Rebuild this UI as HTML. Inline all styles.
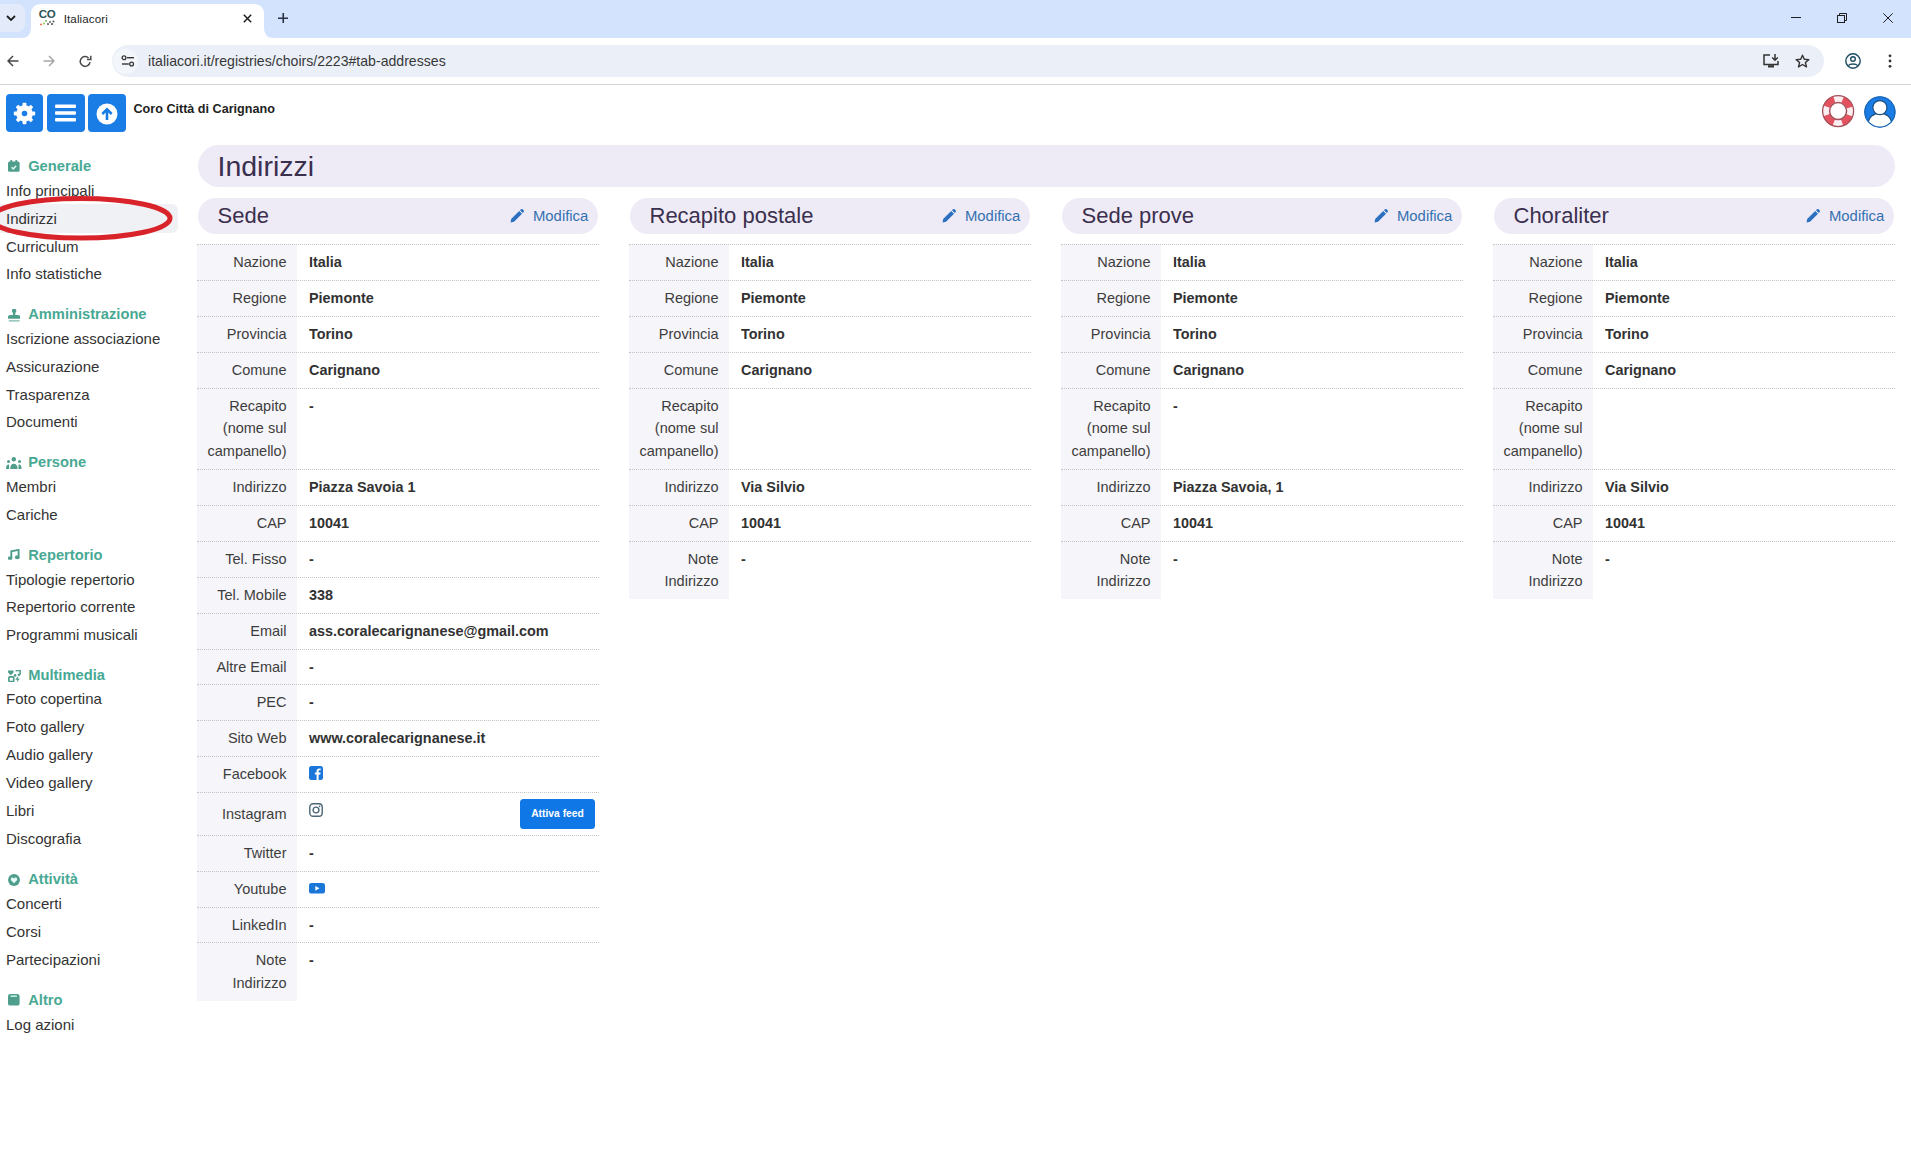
<!DOCTYPE html><html><head><meta charset="utf-8"><title>Italiacori</title><style>
*{box-sizing:border-box;margin:0;padding:0}
html,body{width:1911px;height:1152px;overflow:hidden;background:#fff;font-family:"Liberation Sans",sans-serif;}
.a{position:absolute}
.tabs{left:0;top:0;width:1911px;height:38px;background:#d3e3fd}
.toolbar{left:0;top:37.5px;width:1911px;height:47px;background:#fff;border-bottom:1px solid #d2d4d8}
.omni{left:112px;top:44.6px;width:1712px;height:32.5px;border-radius:17px;background:#ebf0f8}
.sb{left:6px;font-size:15px;line-height:22.5px;color:#333;white-space:nowrap}
.sh{left:8px;font-size:14.7px;line-height:22.5px;color:#47a994;font-weight:bold;white-space:nowrap}
.sh svg{position:absolute;left:0}
.sh span{position:absolute;left:20px;top:0}
.pill{background:#eeebf6;border-radius:22px}
.ttl{color:#3b2f4e}
.lab{font-size:14.5px;line-height:22.5px;color:#3d3d3d;text-align:right;white-space:nowrap}
.val{font-size:14.4px;line-height:22.5px;color:#323232;font-weight:bold;white-space:nowrap}
.bd{height:0;border-top:1px dotted #c4c4c4}
.lbg{background:#f6f5fa}
.mod{font-size:14.85px;line-height:22.5px;color:#3571b0;white-space:nowrap}
</style></head><body>
<div class="a tabs"></div>
<div class="a" style="left:-8px;top:4px;width:33px;height:28px;border-radius:8px;background:#e3ebfa"></div>
<svg class="a" style="left:6px;top:15px" width="10" height="6" viewBox="0 0 10 6"><path d="M1 1l4 4 4-4" fill="none" stroke="#1f1f1f" stroke-width="1.8"/></svg>
<div class="a" style="left:31px;top:4px;width:233px;height:34px;background:#fff;border-radius:9px 9px 0 0"></div>
<svg class="a" style="left:21px;top:28px" width="10" height="10" viewBox="0 0 10 10"><path d="M0 10 Q10 10 10 0 L10 10 Z" fill="#fff"/></svg>
<svg class="a" style="left:264px;top:28px" width="10" height="10" viewBox="0 0 10 10"><path d="M0 0 Q0 10 10 10 L0 10 Z" fill="#fff"/></svg>
<div class="a" style="left:38.8px;top:8px;font-size:11.5px;font-weight:bold;color:#2c5258;letter-spacing:-0.4px;line-height:12px">CO</div>
<svg class="a" style="left:39px;top:19px" width="16" height="7" viewBox="0 0 16 7"><circle cx="2" cy="5.5" r="1" fill="#e8704a"/><circle cx="5" cy="4.5" r="1" fill="#9bc24a"/><circle cx="7" cy="2" r="1" fill="#6cbf6a"/><circle cx="9" cy="5" r="1" fill="#555"/><circle cx="11" cy="3" r="1" fill="#666"/><circle cx="13" cy="5" r="1" fill="#444"/><circle cx="14.5" cy="2.5" r="1" fill="#555"/></svg>
<div class="a" style="left:63.7px;top:11px;font-size:11.6px;line-height:16px;color:#1f1f1f;letter-spacing:0.1px">Italiacori</div>
<svg class="a" style="left:242.5px;top:13.6px" width="9" height="9" viewBox="0 0 9 9"><path d="M0.8 0.8L8.2 8.2M8.2 0.8L0.8 8.2" stroke="#1f1f1f" stroke-width="1.5"/></svg>
<svg class="a" style="left:277.6px;top:12.8px" width="10.5" height="10.5" viewBox="0 0 10.5 10.5"><path d="M5.25 0V10.5M0 5.25H10.5" stroke="#2a3140" stroke-width="1.6"/></svg>
<div class="a" style="left:1791px;top:17px;width:10px;height:1px;background:#1f1f1f"></div>
<svg class="a" style="left:1837px;top:13px" width="10" height="10" viewBox="0 0 10 10"><rect x="0.5" y="2.5" width="7" height="7" fill="none" stroke="#1f1f1f"/><path d="M2.5 2.5V0.5H9.5V7.5H7.5" fill="none" stroke="#1f1f1f"/></svg>
<svg class="a" style="left:1883px;top:13px" width="10" height="10" viewBox="0 0 10 10"><path d="M0.3 0.3L9.7 9.7M9.7 0.3L0.3 9.7" stroke="#1f1f1f" stroke-width="1"/></svg>
<div class="a toolbar"></div>
<svg class="a" style="left:7px;top:55px" width="12" height="12" viewBox="0 0 12 12"><path d="M11.5 6H1.2M6 1L1 6l5 5" fill="none" stroke="#474747" stroke-width="1.5"/></svg>
<svg class="a" style="left:43px;top:55px" width="12" height="12" viewBox="0 0 12 12"><path d="M0.5 6H10.8M6 1l5 5-5 5" fill="none" stroke="#a8a8a8" stroke-width="1.5"/></svg>
<svg class="a" style="left:78.5px;top:54.5px" width="13" height="13" viewBox="0 0 13 13"><path d="M11 7.2A4.9 4.9 0 1 1 9.6 3" fill="none" stroke="#474747" stroke-width="1.5"/><path d="M11.8 0.8V4.6H8" fill="none" stroke="#474747" stroke-width="1.5"/></svg>
<div class="a omni"></div>
<div class="a" style="left:113px;top:49px;width:25px;height:25px;border-radius:13px;background:#f3f6fb"></div>
<svg class="a" style="left:121px;top:55px" width="14" height="12" viewBox="0 0 14 12"><circle cx="3" cy="2.7" r="1.9" fill="none" stroke="#333" stroke-width="1.3"/><path d="M6 2.7H13" stroke="#333" stroke-width="1.4"/><circle cx="10.6" cy="9" r="1.9" fill="none" stroke="#333" stroke-width="1.3"/><path d="M1 9H7.8" stroke="#333" stroke-width="1.4"/></svg>
<div class="a" style="left:148px;top:52px;font-size:14.1px;line-height:18px;color:#383838;white-space:nowrap">italiacori.it/registries/choirs/2223#tab-addresses</div>
<svg class="a" style="left:1763px;top:54px" width="17" height="14" viewBox="0 0 17 14"><path d="M7 1H1V10.5H15V7" fill="none" stroke="#333" stroke-width="1.5"/><path d="M12 0V6M9.2 3.5L12 6.3 14.8 3.5" fill="none" stroke="#333" stroke-width="1.5"/><rect x="5" y="11.2" width="6" height="2.3" fill="#333"/></svg>
<svg class="a" style="left:1795px;top:53.5px" width="15" height="14" viewBox="0 0 15 14"><path d="M7.5 1.2L9.3 5.3 13.8 5.6 10.4 8.5 11.5 12.9 7.5 10.5 3.5 12.9 4.6 8.5 1.2 5.6 5.7 5.3Z" fill="none" stroke="#333" stroke-width="1.4" stroke-linejoin="round"/></svg>
<svg class="a" style="left:1845px;top:53px" width="16" height="16" viewBox="0 0 16 16"><circle cx="8" cy="8" r="7.2" fill="none" stroke="#1d4d63" stroke-width="1.4"/><circle cx="8" cy="6" r="2.3" fill="none" stroke="#1d4d63" stroke-width="1.4"/><path d="M3.3 12.6C5 10.4 11 10.4 12.7 12.6" fill="none" stroke="#1d4d63" stroke-width="1.4"/></svg>
<svg class="a" style="left:1887.5px;top:54px" width="4" height="14" viewBox="0 0 4 14"><circle cx="2" cy="1.8" r="1.4" fill="#333"/><circle cx="2" cy="7" r="1.4" fill="#333"/><circle cx="2" cy="12.3" r="1.4" fill="#333"/></svg>
<div class="a" style="left:6px;top:94px;width:37.3px;height:37.5px;border-radius:4px;background:#1a7de6"></div>
<div class="a" style="left:47.3px;top:94px;width:37.3px;height:37.5px;border-radius:4px;background:#1a7de6"></div>
<div class="a" style="left:88.4px;top:94px;width:37.3px;height:37.5px;border-radius:4px;background:#1a7de6"></div>
<svg class="a" style="left:13.4px;top:102.3px" width="23" height="23" viewBox="-11.5 -11.5 23 23"><circle r="8.3" fill="#fff"/><rect x="-1.9" y="-10.7" width="3.8" height="4" rx="0.8" transform="rotate(0)" fill="#fff"/><rect x="-1.9" y="-10.7" width="3.8" height="4" rx="0.8" transform="rotate(45)" fill="#fff"/><rect x="-1.9" y="-10.7" width="3.8" height="4" rx="0.8" transform="rotate(90)" fill="#fff"/><rect x="-1.9" y="-10.7" width="3.8" height="4" rx="0.8" transform="rotate(135)" fill="#fff"/><rect x="-1.9" y="-10.7" width="3.8" height="4" rx="0.8" transform="rotate(180)" fill="#fff"/><rect x="-1.9" y="-10.7" width="3.8" height="4" rx="0.8" transform="rotate(225)" fill="#fff"/><rect x="-1.9" y="-10.7" width="3.8" height="4" rx="0.8" transform="rotate(270)" fill="#fff"/><rect x="-1.9" y="-10.7" width="3.8" height="4" rx="0.8" transform="rotate(315)" fill="#fff"/><circle r="2.8" fill="#1a7de6"/></svg>
<svg class="a" style="left:55px;top:104px" width="21" height="18" viewBox="0 0 21 18"><rect x="0" y="0.5" width="21" height="3.4" rx="1" fill="#fff"/><rect x="0" y="7.3" width="21" height="3.4" rx="1" fill="#fff"/><rect x="0" y="14" width="21" height="3.4" rx="1" fill="#fff"/></svg>
<svg class="a" style="left:95.5px;top:102.5px" width="22" height="22" viewBox="0 0 22 22"><circle cx="11" cy="11" r="10.5" fill="#fff"/><path d="M11 17V6.5M6.3 11L11 6.3 15.7 11" fill="none" stroke="#1a7de6" stroke-width="2.6" stroke-linecap="butt"/></svg>
<div class="a" style="left:133.5px;top:101.03px;font-size:12.6px;line-height:16px;font-weight:bold;color:#222;white-space:nowrap">Coro Città di Carignano</div>
<svg class="a" style="left:1820px;top:92.5px" width="36" height="36" viewBox="0 0 36 36"><circle cx="18.1" cy="18.1" r="12.3" fill="none" stroke="#fbeef1" stroke-width="6.6"/><circle cx="18.1" cy="18.1" r="12.3" fill="none" stroke="#e4525f" stroke-width="6.6" stroke-dasharray="10.73 8.59" stroke-dashoffset="-4.3"/><circle cx="18.1" cy="18.1" r="15.5" fill="none" stroke="#a65058" stroke-width="1.3"/><circle cx="18.1" cy="18.1" r="8.5" fill="none" stroke="#a65058" stroke-width="1.5"/></svg>
<svg class="a" style="left:1862px;top:93.5px" width="36" height="36" viewBox="0 0 36 36"><defs><clipPath id="uc"><circle cx="17.9" cy="18" r="14.4"/></clipPath></defs><circle cx="17.9" cy="18" r="15.7" fill="#1a7de6"/><circle cx="17.9" cy="18" r="15.2" fill="none" stroke="#1c5fa6" stroke-width="1"/><g clip-path="url(#uc)"><ellipse cx="17.9" cy="29.6" rx="11.6" ry="10.5" fill="#fff" stroke="#1b4a78" stroke-width="1.1"/></g><circle cx="17.9" cy="13.6" r="7" fill="#fff" stroke="#1b4a78" stroke-width="1.1"/></svg>
<div class="a" style="left:0;top:203.5px;width:178px;height:29.5px;background:#eff1f4;border-radius:0 6px 6px 0"></div>
<div class="a" style="left:8px;top:160.0px;line-height:0"><svg width="12" height="12" viewBox="0 0 12 12"><rect x="0" y="1.6" width="11.6" height="10.2" rx="1.6" fill="#4f9e8c"/><rect x="2.4" y="0" width="1.8" height="3" rx=".5" fill="#4f9e8c"/><rect x="7.4" y="0" width="1.8" height="3" rx=".5" fill="#4f9e8c"/><path d="M3.6 7.3L5.3 8.9 8.2 5.8" fill="none" stroke="#dffaf2" stroke-width="1.5"/></svg></div>
<div class="a sh" style="left:28.2px;top:154.96px">Generale</div>
<div class="a sb" style="top:179.75px">Info principali</div>
<div class="a sb" style="top:207.65px">Indirizzi</div>
<div class="a sb" style="top:235.55px">Curriculum</div>
<div class="a sb" style="top:263.45px">Info statistiche</div>
<div class="a" style="left:8px;top:308.9px;line-height:0"><svg width="12.5" height="13" viewBox="0 0 12.5 13"><rect x="4" y="0" width="4.2" height="3.6" rx="1.2" fill="#4f9e8c"/><rect x="5" y="2.5" width="2.3" height="3.6" fill="#4f9e8c"/><path d="M0 9.8V8C0 6.8 1 6 2.2 6H10C11.2 6 12.1 6.8 12.1 8V9.8Z" fill="#4f9e8c"/><rect x="0.7" y="11.2" width="11" height="1.2" rx=".5" fill="#4f9e8c" opacity=".75"/></svg></div>
<div class="a sh" style="left:28.2px;top:302.96px">Amministrazione</div>
<div class="a sb" style="top:327.75px">Iscrizione associazione</div>
<div class="a sb" style="top:355.65px">Assicurazione</div>
<div class="a sb" style="top:383.55px">Trasparenza</div>
<div class="a sb" style="top:411.45px">Documenti</div>
<div class="a" style="left:6px;top:457.0px;line-height:0"><svg width="16" height="12" viewBox="0 0 16 12"><circle cx="7.8" cy="2.3" r="2.2" fill="#4f9e8c"/><circle cx="2.5" cy="4.4" r="1.5" fill="#4f9e8c"/><circle cx="13.5" cy="4.4" r="1.5" fill="#4f9e8c"/><path d="M4.2 11.9C4.2 8.3 5.6 6.8 7.8 6.8S11.6 8.3 11.6 11.9Z" fill="#4f9e8c"/><path d="M0 11.9C0 9.2 0.9 7.5 2.5 7.5L3.1 7.6 3.1 11.9Z M15.6 11.9C15.6 9.2 14.7 7.5 13.1 7.5L12.5 7.6 12.5 11.9Z" fill="#4f9e8c"/></svg></div>
<div class="a sh" style="left:28.2px;top:451.16px">Persone</div>
<div class="a sb" style="top:475.95px">Membri</div>
<div class="a sb" style="top:503.85px">Cariche</div>
<div class="a" style="left:8px;top:549.0px;line-height:0"><svg width="12" height="11" viewBox="0 0 12 11"><path d="M3.3 9.2V2.3L10.6 0.9V7.5" fill="none" stroke="#4f9e8c" stroke-width="1.9"/><rect x="0" y="7.6" width="4.2" height="3.2" rx="1" fill="#4f9e8c"/><ellipse cx="9.3" cy="8.2" rx="2.4" ry="2" fill="#4f9e8c"/></svg></div>
<div class="a sh" style="left:28.2px;top:543.76px">Repertorio</div>
<div class="a sb" style="top:568.55px">Tipologie repertorio</div>
<div class="a sb" style="top:596.45px">Repertorio corrente</div>
<div class="a sb" style="top:624.35px">Programmi musicali</div>
<div class="a" style="left:8px;top:669.8px;line-height:0"><svg width="13" height="12.5" viewBox="0 0 13 12.5"><path d="M2.8 5.2L0.3 2.7C-.5 1.8.1.2 1.4.2 2 .2 2.5.6 2.8 1 3.1.6 3.6.2 4.2.2 5.5.2 6.1 1.8 5.3 2.7Z" fill="#4f9e8c"/><path d="M7.6 0.8L12.2 0.2V4.6" fill="none" stroke="#4f9e8c" stroke-width="1.5"/><circle cx="11" cy="4.7" r="1.3" fill="#4f9e8c"/><circle cx="7.1" cy="5.4" r="1.3" fill="#4f9e8c"/><rect x="0.9" y="6.9" width="4.8" height="4.6" rx="0.8" fill="none" stroke="#4f9e8c" stroke-width="1.7"/><path d="M9.5 6.8L7.2 9.8H9.4L8.6 12.5 11.9 8.8H9.7L10.6 6.8Z" fill="#4f9e8c"/></svg></div>
<div class="a sh" style="left:28.2px;top:663.66px">Multimedia</div>
<div class="a sb" style="top:688.45px">Foto copertina</div>
<div class="a sb" style="top:716.35px">Foto gallery</div>
<div class="a sb" style="top:744.25px">Audio gallery</div>
<div class="a sb" style="top:772.15px">Video gallery</div>
<div class="a sb" style="top:800.05px">Libri</div>
<div class="a sb" style="top:827.95px">Discografia</div>
<div class="a" style="left:8px;top:874.0px;line-height:0"><svg width="12" height="12" viewBox="0 0 12 12"><circle cx="6" cy="6" r="5.95" fill="#4f9e8c"/><path d="M6 9.3L3.2 6.5C2.4 5.6 2.9 3.6 4.3 3.6 5.1 3.6 5.6 4.2 6 4.7 6.4 4.2 6.9 3.6 7.7 3.6 9.1 3.6 9.6 5.6 8.8 6.5Z" fill="#e6fbf5"/></svg></div>
<div class="a sh" style="left:28.2px;top:868.16px">Attività</div>
<div class="a sb" style="top:892.95px">Concerti</div>
<div class="a sb" style="top:920.85px">Corsi</div>
<div class="a sb" style="top:948.75px">Partecipazioni</div>
<div class="a" style="left:8.2px;top:994.0px;line-height:0"><svg width="11.6" height="11.6" viewBox="0 0 11.6 11.6"><rect x="0" y="0" width="11.6" height="11.6" rx="2.2" fill="#4f9e8c"/><rect x="2.6" y="1.4" width="6.3" height="1.5" fill="#c9f3e6"/></svg></div>
<div class="a sh" style="left:28.2px;top:989.16px">Altro</div>
<div class="a sb" style="top:1013.95px">Log azioni</div>
<svg class="a" style="left:0;top:190px" width="180" height="56" viewBox="0 190 180 56"><ellipse cx="80.5" cy="218.3" rx="89.5" ry="19.8" fill="none" stroke="#d9232b" stroke-width="5"/></svg>
<div class="a pill" style="left:197.5px;top:145px;width:1697.5px;height:42px;border-radius:21px"></div>
<div class="a ttl" style="left:217.5px;top:148.92px;font-size:28.5px;line-height:34px">Indirizzi</div>
<div class="a pill" style="left:198.0px;top:198.2px;width:400.3px;height:35.4px;border-radius:18px"></div>
<div class="a ttl" style="left:217.5px;top:201.78px;font-size:22px;line-height:28px;white-space:nowrap">Sede</div>
<svg class="a" style="left:510.0px;top:208.5px" width="14" height="14" viewBox="0 0 14 14"><path d="M0.6 13.4L1.2 10 9.2 2 12 4.8 4 12.8Z" fill="#2a6fc0"/><path d="M10 1.2L11 0.3C11.5-.1 12-.1 12.5.3L13.7 1.5C14.1 2 14.1 2.5 13.7 3L12.8 4Z" fill="#2a6fc0"/></svg>
<div class="a mod" style="left:533.0px;top:204.70px">Modifica</div>
<div class="a lbg" style="left:197px;top:244.3px;width:99.8px;height:756.3px"></div>
<div class="a bd" style="left:197px;top:243.8px;width:402.3px"></div>
<div class="a lab" style="left:197px;width:89.5px;top:251.03px">Nazione</div>
<div class="a val" style="left:309px;top:251.06px">Italia</div>
<div class="a bd" style="left:197px;top:279.8px;width:402.3px"></div>
<div class="a lab" style="left:197px;width:89.5px;top:287.03px">Regione</div>
<div class="a val" style="left:309px;top:287.06px">Piemonte</div>
<div class="a bd" style="left:197px;top:315.8px;width:402.3px"></div>
<div class="a lab" style="left:197px;width:89.5px;top:323.03px">Provincia</div>
<div class="a val" style="left:309px;top:323.06px">Torino</div>
<div class="a bd" style="left:197px;top:351.8px;width:402.3px"></div>
<div class="a lab" style="left:197px;width:89.5px;top:359.03px">Comune</div>
<div class="a val" style="left:309px;top:359.06px">Carignano</div>
<div class="a bd" style="left:197px;top:387.6px;width:402.3px"></div>
<div class="a lab" style="left:197px;width:89.5px;top:394.83px">Recapito<br>(nome sul<br>campanello)</div>
<div class="a val" style="left:309px;top:394.86px">-</div>
<div class="a bd" style="left:197px;top:468.9px;width:402.3px"></div>
<div class="a lab" style="left:197px;width:89.5px;top:476.13px">Indirizzo</div>
<div class="a val" style="left:309px;top:476.16px">Piazza Savoia 1</div>
<div class="a bd" style="left:197px;top:504.8px;width:402.3px"></div>
<div class="a lab" style="left:197px;width:89.5px;top:512.03px">CAP</div>
<div class="a val" style="left:309px;top:512.06px">10041</div>
<div class="a bd" style="left:197px;top:540.8px;width:402.3px"></div>
<div class="a lab" style="left:197px;width:89.5px;top:547.98px">Tel. Fisso</div>
<div class="a val" style="left:309px;top:548.01px">-</div>
<div class="a bd" style="left:197px;top:576.9px;width:402.3px"></div>
<div class="a lab" style="left:197px;width:89.5px;top:584.13px">Tel. Mobile</div>
<div class="a val" style="left:309px;top:584.16px">338</div>
<div class="a bd" style="left:197px;top:612.7px;width:402.3px"></div>
<div class="a lab" style="left:197px;width:89.5px;top:619.93px">Email</div>
<div class="a val" style="left:309px;top:619.96px">ass.coralecarignanese@gmail.com</div>
<div class="a bd" style="left:197px;top:649.0px;width:402.3px"></div>
<div class="a lab" style="left:197px;width:89.5px;top:656.23px">Altre Email</div>
<div class="a val" style="left:309px;top:656.26px">-</div>
<div class="a bd" style="left:197px;top:683.6px;width:402.3px"></div>
<div class="a lab" style="left:197px;width:89.5px;top:690.83px">PEC</div>
<div class="a val" style="left:309px;top:690.86px">-</div>
<div class="a bd" style="left:197px;top:719.9px;width:402.3px"></div>
<div class="a lab" style="left:197px;width:89.5px;top:727.13px">Sito Web</div>
<div class="a val" style="left:309px;top:727.16px">www.coralecarignanese.it</div>
<div class="a bd" style="left:197px;top:755.8px;width:402.3px"></div>
<div class="a lab" style="left:197px;width:89.5px;top:763.03px">Facebook</div>
<div class="a" style="left:309px;top:765.9px;line-height:0"><svg width="14" height="14" viewBox="0 0 14 14"><rect width="14" height="14" rx="2.5" fill="#1a77d9"/><path d="M9.6 14V8.6H11.3L11.6 6.6H9.6V5.3C9.6 4.7 9.9 4.3 10.7 4.3H11.7V2.5C11.5 2.5 10.8 2.4 10.1 2.4 8.6 2.4 7.6 3.3 7.6 5V6.6H5.9V8.6H7.6V14Z" fill="#fff"/></svg></div>
<div class="a bd" style="left:197px;top:792.3px;width:402.3px"></div>
<div class="a lab" style="left:197px;width:89.5px;top:802.53px">Instagram</div>
<div class="a" style="left:309px;top:802.5px;line-height:0"><svg width="14" height="14" viewBox="0 0 14 14"><rect x="0.8" y="0.8" width="12.4" height="12.4" rx="3.3" fill="none" stroke="#4b6576" stroke-width="1.4"/><circle cx="7" cy="7" r="2.9" fill="none" stroke="#4b6576" stroke-width="1.4"/><circle cx="10.6" cy="3.4" r="0.8" fill="#4b6576"/></svg></div>
<div class="a" style="left:520px;top:799.1px;width:75px;height:29.7px;border-radius:3.5px;background:#0f78e6;color:#fff;font-weight:bold;font-size:10.3px;line-height:29.7px;text-align:center;white-space:nowrap">Attiva feed</div>
<div class="a bd" style="left:197px;top:835.0px;width:402.3px"></div>
<div class="a lab" style="left:197px;width:89.5px;top:842.23px">Twitter</div>
<div class="a val" style="left:309px;top:842.26px">-</div>
<div class="a bd" style="left:197px;top:871.0px;width:402.3px"></div>
<div class="a lab" style="left:197px;width:89.5px;top:878.23px">Youtube</div>
<div class="a" style="left:309px;top:883.3px;line-height:0"><svg width="16" height="11" viewBox="0 0 16 11"><rect width="16" height="10.6" rx="2.6" fill="#1a77d9"/><path d="M6.3 2.9V7.7L10.4 5.3Z" fill="#fff"/></svg></div>
<div class="a bd" style="left:197px;top:906.6px;width:402.3px"></div>
<div class="a lab" style="left:197px;width:89.5px;top:913.83px">LinkedIn</div>
<div class="a val" style="left:309px;top:913.86px">-</div>
<div class="a bd" style="left:197px;top:941.8px;width:402.3px"></div>
<div class="a lab" style="left:197px;width:89.5px;top:949.03px">Note<br>Indirizzo</div>
<div class="a val" style="left:309px;top:949.06px">-</div>
<div class="a pill" style="left:630.0px;top:198.2px;width:400.3px;height:35.4px;border-radius:18px"></div>
<div class="a ttl" style="left:649.5px;top:201.78px;font-size:22px;line-height:28px;white-space:nowrap">Recapito postale</div>
<svg class="a" style="left:942.0px;top:208.5px" width="14" height="14" viewBox="0 0 14 14"><path d="M0.6 13.4L1.2 10 9.2 2 12 4.8 4 12.8Z" fill="#2a6fc0"/><path d="M10 1.2L11 0.3C11.5-.1 12-.1 12.5.3L13.7 1.5C14.1 2 14.1 2.5 13.7 3L12.8 4Z" fill="#2a6fc0"/></svg>
<div class="a mod" style="left:965.0px;top:204.70px">Modifica</div>
<div class="a lbg" style="left:629px;top:244.3px;width:99.8px;height:355.0px"></div>
<div class="a bd" style="left:629px;top:243.8px;width:402.3px"></div>
<div class="a lab" style="left:629px;width:89.5px;top:251.03px">Nazione</div>
<div class="a val" style="left:741px;top:251.06px">Italia</div>
<div class="a bd" style="left:629px;top:279.8px;width:402.3px"></div>
<div class="a lab" style="left:629px;width:89.5px;top:287.03px">Regione</div>
<div class="a val" style="left:741px;top:287.06px">Piemonte</div>
<div class="a bd" style="left:629px;top:315.8px;width:402.3px"></div>
<div class="a lab" style="left:629px;width:89.5px;top:323.03px">Provincia</div>
<div class="a val" style="left:741px;top:323.06px">Torino</div>
<div class="a bd" style="left:629px;top:351.8px;width:402.3px"></div>
<div class="a lab" style="left:629px;width:89.5px;top:359.03px">Comune</div>
<div class="a val" style="left:741px;top:359.06px">Carignano</div>
<div class="a bd" style="left:629px;top:387.6px;width:402.3px"></div>
<div class="a lab" style="left:629px;width:89.5px;top:394.83px">Recapito<br>(nome sul<br>campanello)</div>
<div class="a bd" style="left:629px;top:468.9px;width:402.3px"></div>
<div class="a lab" style="left:629px;width:89.5px;top:476.13px">Indirizzo</div>
<div class="a val" style="left:741px;top:476.16px">Via Silvio</div>
<div class="a bd" style="left:629px;top:504.8px;width:402.3px"></div>
<div class="a lab" style="left:629px;width:89.5px;top:512.03px">CAP</div>
<div class="a val" style="left:741px;top:512.06px">10041</div>
<div class="a bd" style="left:629px;top:540.8px;width:402.3px"></div>
<div class="a lab" style="left:629px;width:89.5px;top:547.98px">Note<br>Indirizzo</div>
<div class="a val" style="left:741px;top:548.01px">-</div>
<div class="a pill" style="left:1062.0px;top:198.2px;width:400.3px;height:35.4px;border-radius:18px"></div>
<div class="a ttl" style="left:1081.5px;top:201.78px;font-size:22px;line-height:28px;white-space:nowrap">Sede prove</div>
<svg class="a" style="left:1374.0px;top:208.5px" width="14" height="14" viewBox="0 0 14 14"><path d="M0.6 13.4L1.2 10 9.2 2 12 4.8 4 12.8Z" fill="#2a6fc0"/><path d="M10 1.2L11 0.3C11.5-.1 12-.1 12.5.3L13.7 1.5C14.1 2 14.1 2.5 13.7 3L12.8 4Z" fill="#2a6fc0"/></svg>
<div class="a mod" style="left:1397.0px;top:204.70px">Modifica</div>
<div class="a lbg" style="left:1061px;top:244.3px;width:99.8px;height:355.0px"></div>
<div class="a bd" style="left:1061px;top:243.8px;width:402.3px"></div>
<div class="a lab" style="left:1061px;width:89.5px;top:251.03px">Nazione</div>
<div class="a val" style="left:1173px;top:251.06px">Italia</div>
<div class="a bd" style="left:1061px;top:279.8px;width:402.3px"></div>
<div class="a lab" style="left:1061px;width:89.5px;top:287.03px">Regione</div>
<div class="a val" style="left:1173px;top:287.06px">Piemonte</div>
<div class="a bd" style="left:1061px;top:315.8px;width:402.3px"></div>
<div class="a lab" style="left:1061px;width:89.5px;top:323.03px">Provincia</div>
<div class="a val" style="left:1173px;top:323.06px">Torino</div>
<div class="a bd" style="left:1061px;top:351.8px;width:402.3px"></div>
<div class="a lab" style="left:1061px;width:89.5px;top:359.03px">Comune</div>
<div class="a val" style="left:1173px;top:359.06px">Carignano</div>
<div class="a bd" style="left:1061px;top:387.6px;width:402.3px"></div>
<div class="a lab" style="left:1061px;width:89.5px;top:394.83px">Recapito<br>(nome sul<br>campanello)</div>
<div class="a val" style="left:1173px;top:394.86px">-</div>
<div class="a bd" style="left:1061px;top:468.9px;width:402.3px"></div>
<div class="a lab" style="left:1061px;width:89.5px;top:476.13px">Indirizzo</div>
<div class="a val" style="left:1173px;top:476.16px">Piazza Savoia, 1</div>
<div class="a bd" style="left:1061px;top:504.8px;width:402.3px"></div>
<div class="a lab" style="left:1061px;width:89.5px;top:512.03px">CAP</div>
<div class="a val" style="left:1173px;top:512.06px">10041</div>
<div class="a bd" style="left:1061px;top:540.8px;width:402.3px"></div>
<div class="a lab" style="left:1061px;width:89.5px;top:547.98px">Note<br>Indirizzo</div>
<div class="a val" style="left:1173px;top:548.01px">-</div>
<div class="a pill" style="left:1494.0px;top:198.2px;width:400.3px;height:35.4px;border-radius:18px"></div>
<div class="a ttl" style="left:1513.5px;top:201.78px;font-size:22px;line-height:28px;white-space:nowrap">Choraliter</div>
<svg class="a" style="left:1806.0px;top:208.5px" width="14" height="14" viewBox="0 0 14 14"><path d="M0.6 13.4L1.2 10 9.2 2 12 4.8 4 12.8Z" fill="#2a6fc0"/><path d="M10 1.2L11 0.3C11.5-.1 12-.1 12.5.3L13.7 1.5C14.1 2 14.1 2.5 13.7 3L12.8 4Z" fill="#2a6fc0"/></svg>
<div class="a mod" style="left:1829.0px;top:204.70px">Modifica</div>
<div class="a lbg" style="left:1493px;top:244.3px;width:99.8px;height:355.0px"></div>
<div class="a bd" style="left:1493px;top:243.8px;width:402.3px"></div>
<div class="a lab" style="left:1493px;width:89.5px;top:251.03px">Nazione</div>
<div class="a val" style="left:1605px;top:251.06px">Italia</div>
<div class="a bd" style="left:1493px;top:279.8px;width:402.3px"></div>
<div class="a lab" style="left:1493px;width:89.5px;top:287.03px">Regione</div>
<div class="a val" style="left:1605px;top:287.06px">Piemonte</div>
<div class="a bd" style="left:1493px;top:315.8px;width:402.3px"></div>
<div class="a lab" style="left:1493px;width:89.5px;top:323.03px">Provincia</div>
<div class="a val" style="left:1605px;top:323.06px">Torino</div>
<div class="a bd" style="left:1493px;top:351.8px;width:402.3px"></div>
<div class="a lab" style="left:1493px;width:89.5px;top:359.03px">Comune</div>
<div class="a val" style="left:1605px;top:359.06px">Carignano</div>
<div class="a bd" style="left:1493px;top:387.6px;width:402.3px"></div>
<div class="a lab" style="left:1493px;width:89.5px;top:394.83px">Recapito<br>(nome sul<br>campanello)</div>
<div class="a bd" style="left:1493px;top:468.9px;width:402.3px"></div>
<div class="a lab" style="left:1493px;width:89.5px;top:476.13px">Indirizzo</div>
<div class="a val" style="left:1605px;top:476.16px">Via Silvio</div>
<div class="a bd" style="left:1493px;top:504.8px;width:402.3px"></div>
<div class="a lab" style="left:1493px;width:89.5px;top:512.03px">CAP</div>
<div class="a val" style="left:1605px;top:512.06px">10041</div>
<div class="a bd" style="left:1493px;top:540.8px;width:402.3px"></div>
<div class="a lab" style="left:1493px;width:89.5px;top:547.98px">Note<br>Indirizzo</div>
<div class="a val" style="left:1605px;top:548.01px">-</div>
</body></html>
